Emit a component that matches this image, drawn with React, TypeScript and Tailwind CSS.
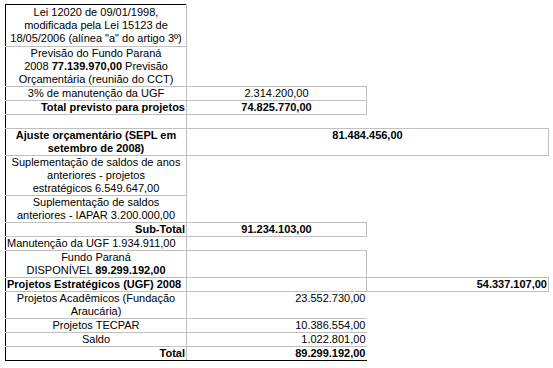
import React from "react";

// grey grid lines, black outer edge on the left / top / bottom
const c1 = "border-l border-r border-b border-[#c0c0c0] border-l-black px-px align-top";

export default function App() {
  return (
    <div className="min-h-screen bg-white pl-[5px] pt-[4px] font-['Liberation_Sans',Arial,sans-serif] text-[11px] leading-[13px] text-black">
      <table className="w-[543px] table-fixed border-collapse">
        <colgroup>
          <col className="w-[181px]" />
          <col className="w-[180px]" />
          <col className="w-[182px]" />
        </colgroup>
        <tbody>
          <tr>
            <td className={`${c1} border-t border-t-black pt-px pb-px text-center`}>
              Lei 12020 de 09/01/1998,
              <br />
              modificada pela Lei 15123 de
              <br />
              <span className="whitespace-nowrap">18/05/2006 (alínea "a" do artigo 3º)</span>
            </td>
            <td />
            <td />
          </tr>
          <tr>
            <td className={`${c1} text-center`}>
              Previsão do Fundo Paraná
              <br />
              2008 <b>77.139.970,00</b> Previsão
              <br />
              Orçamentária (reunião do CCT)
            </td>
            <td />
            <td />
          </tr>
          <tr>
            <td className={`${c1} text-center`}>3% de manutenção da UGF</td>
            <td className="border-t border-r border-b border-[#c0c0c0] px-px text-center align-top">2.314.200,00</td>
            <td />
          </tr>
          <tr>
            <td className={`${c1} text-right font-bold`}>Total previsto para projetos</td>
            <td className="border-t border-r border-b border-[#c0c0c0] px-px text-center align-top font-bold">74.825.770,00</td>
            <td />
          </tr>
          <tr>
            <td className={`${c1} h-[14px]`}></td>
            <td className="border-t border-b border-[#c0c0c0]" />
            <td />
          </tr>
          <tr>
            <td className={`${c1} text-center font-bold`}>
              Ajuste orçamentário (SEPL em
              <br />
              setembro de 2008)
            </td>
            <td colSpan={2} className="border border-[#c0c0c0] px-px text-center align-top font-bold">
              81.484.456,00
            </td>
          </tr>
          <tr>
            <td className={`${c1} text-center`}>
              Suplementação de saldos de anos
              <br />
              anteriores - projetos
              <br />
              estratégicos 6.549.647,00
            </td>
            <td />
            <td />
          </tr>
          <tr>
            <td className={`${c1} text-center`}>
              Suplementação de saldos
              <br />
              anteriores - IAPAR 3.200.000,00
            </td>
            <td />
            <td />
          </tr>
          <tr>
            <td className={`${c1} text-right font-bold`}>Sub-Total</td>
            <td className="border-t border-r border-b border-[#c0c0c0] px-px text-center align-top font-bold">91.234.103,00</td>
            <td />
          </tr>
          <tr>
            <td className={`${c1} text-left whitespace-nowrap`}>Manutenção da UGF 1.934.911,00</td>
            <td className="border-b border-[#c0c0c0]" />
            <td />
          </tr>
          <tr>
            <td className={`${c1} text-center`}>
              Fundo Paraná
              <br />
              DISPONÍVEL <b>89.299.192,00</b>
            </td>
            <td className="border-t border-r border-b border-[#c0c0c0]" />
            <td />
          </tr>
          <tr>
            <td className={`${c1} text-left font-bold whitespace-nowrap`}>Projetos Estratégicos (UGF) 2008</td>
            <td className="border-t border-r border-b border-[#c0c0c0]" />
            <td className="border-t border-r border-b border-[#c0c0c0] px-px text-right align-top font-bold">54.337.107,00</td>
          </tr>
          <tr>
            <td className={`${c1} text-center`}>
              Projetos Acadêmicos (Fundação
              <br />
              Araucária)
            </td>
            <td className="border-t border-b border-[#c0c0c0] px-px text-right align-top">23.552.730,00</td>
            <td />
          </tr>
          <tr>
            <td className={`${c1} text-center`}>Projetos TECPAR</td>
            <td className="border-b border-[#c0c0c0] px-px text-right align-top">10.386.554,00</td>
            <td />
          </tr>
          <tr>
            <td className={`${c1} text-center`}>Saldo</td>
            <td className="border-b border-[#c0c0c0] px-px text-right align-top">1.022.801,00</td>
            <td />
          </tr>
          <tr>
            <td className={`${c1} border-b-black text-right font-bold`}>Total</td>
            <td className="border-b border-b-black px-px text-right align-top font-bold">89.299.192,00</td>
            <td />
          </tr>
        </tbody>
      </table>
    </div>
  );
}
